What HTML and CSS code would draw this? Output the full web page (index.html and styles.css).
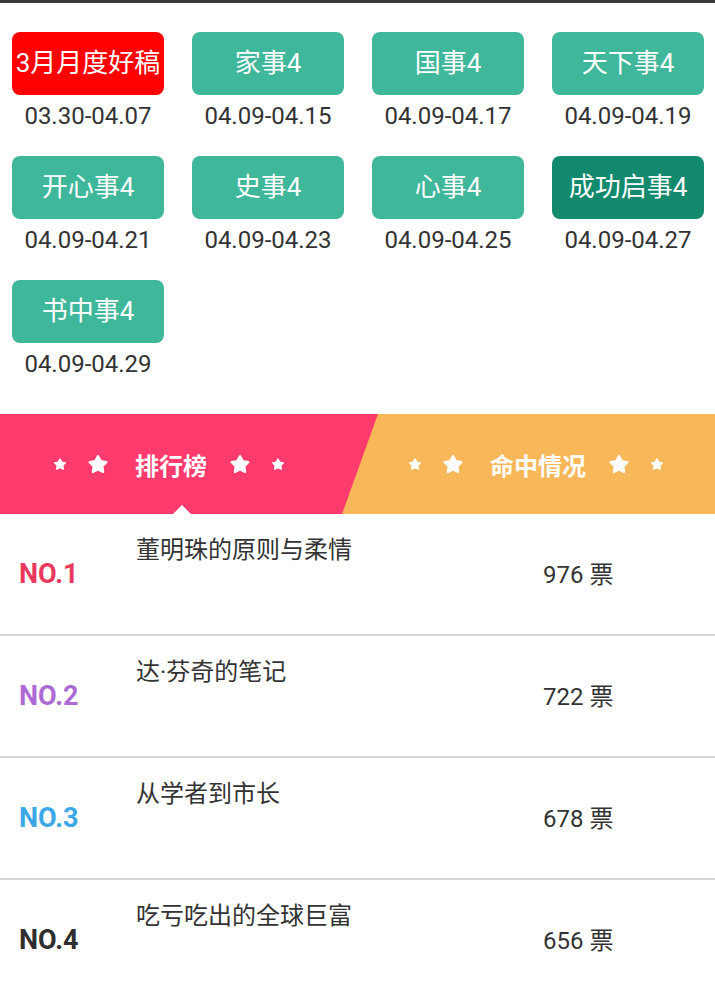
FILE: index.html
```html
<!DOCTYPE html>
<html lang="zh-CN">
<head>
    <meta charset="UTF-8">
    <title>月度好稿</title>
    <link rel="stylesheet" href="styles.css">
</head>
<body>
    <div class="topbar"></div>

    <!-- 期数按钮 -->
    <ul class="periods">
        <li><p class="btn red">3月月度好稿</p><p class="date">03.30-04.07</p></li>
        <li><p class="btn">家事4</p><p class="date">04.09-04.15</p></li>
        <li><p class="btn">国事4</p><p class="date">04.09-04.17</p></li>
        <li><p class="btn">天下事4</p><p class="date">04.09-04.19</p></li>
        <li><p class="btn">开心事4</p><p class="date">04.09-04.21</p></li>
        <li><p class="btn">史事4</p><p class="date">04.09-04.23</p></li>
        <li><p class="btn">心事4</p><p class="date">04.09-04.25</p></li>
        <li><p class="btn dark">成功启事4</p><p class="date">04.09-04.27</p></li>
        <li><p class="btn">书中事4</p><p class="date">04.09-04.29</p></li>
    </ul>

    <svg width="0" height="0" class="defs">
        <symbol id="star" viewBox="0 0 20 20">
            <polygon points="10,2.8 12.47,7.4 17.61,8.33 13.99,12.1 14.7,17.27 10,15 5.3,17.27 6.01,12.1 2.39,8.33 7.53,7.4"
                     fill="#fff" stroke="#fff" stroke-width="2" stroke-linejoin="round"/>
        </symbol>
    </svg>

    <!-- 选项卡 -->
    <div class="tabs">
        <div class="tab rank">
            <svg class="s"><use href="#star"/></svg>
            <svg class="b"><use href="#star"/></svg>
            <span>排行榜</span>
            <svg class="b"><use href="#star"/></svg>
            <svg class="s"><use href="#star"/></svg>
            <i class="arrow"></i>
        </div>
        <div class="tab hit">
            <svg class="s"><use href="#star"/></svg>
            <svg class="b"><use href="#star"/></svg>
            <span>命中情况</span>
            <svg class="b"><use href="#star"/></svg>
            <svg class="s"><use href="#star"/></svg>
        </div>
    </div>

    <!-- 排行列表 -->
    <ul class="list">
        <li><b class="no n1">NO.1</b><p class="title">董明珠的原则与柔情</p><p class="vote">976 票</p></li>
        <li><b class="no n2">NO.2</b><p class="title">达·芬奇的笔记</p><p class="vote">722 票</p></li>
        <li><b class="no n3">NO.3</b><p class="title">从学者到市长</p><p class="vote">678 票</p></li>
        <li><b class="no n4">NO.4</b><p class="title">吃亏吃出的全球巨富</p><p class="vote">656 票</p></li>
    </ul>
</body>
</html>
```

FILE: styles.css
```css
*{
    margin: 0;
    padding: 0;
}
body{
    background: #fff;
    font-family: Roboto, "Noto Sans CJK SC", sans-serif;
    color: #333;
}
.topbar{
    height: 3px;
    background: #3a3a3a;
}
.defs{
    position: absolute;
}
.periods{
    display: grid;
    grid-template-columns: repeat(4, 152px);
    column-gap: 28px;
    row-gap: 22px;
    padding: 29px 11px 0 12px;
    list-style: none;
}
.periods .btn{
    height: 63px;
    line-height: 63px;
    border-radius: 8px;
    background: #3fb79a;
    color: #fff;
    font-size: 26px;
    text-align: center;
    white-space: nowrap;
}
.periods .btn.red{
    background: #fe0000;
}
.periods .btn.dark{
    background: #13896d;
}
.periods .date{
    padding-top: 3px;
    line-height: 36px;
    font-size: 24px;
    text-align: center;
    color: #333;
}
.tabs{
    display: flex;
    height: 100px;
    margin-top: 32px;
}
.tab{
    display: flex;
    align-items: center;
    justify-content: center;
    gap: 20px;
    color: #fff;
    font-size: 24px;
    font-weight: bold;
    font-family: "Noto Sans CJK SC", sans-serif;
}
.tab.rank{
    position: relative;
    z-index: 1;
    width: 378px;
    padding-right: 40px;
    box-sizing: border-box;
    background: #fe3b6c;
    clip-path: polygon(0 0, 100% 0, calc(100% - 36px) 100%, 0 100%);
}
.tab.hit{
    flex: 1;
    margin-left: -36px;
    padding-left: 15px;
    background: #f8b85a;
}
.tab span{
    margin: 0 2px 0 6px;
}
.tab .s{
    width: 14px;
    height: 14px;
}
.tab .b{
    width: 22px;
    height: 22px;
}
.tab .arrow{
    position: absolute;
    left: 173px;
    bottom: 0;
    border: 9px solid transparent;
    border-bottom-color: #fff;
    border-top: 0;
    height: 0;
}
.list{
    list-style: none;
}
.list li{
    display: flex;
    align-items: center;
    height: 120px;
    border-bottom: 2px solid #d6d6d6;
}
.list .no{
    width: 117px;
    padding-left: 19px;
    font-size: 27px;
    font-weight: bold;
}
.list .n1{ color: #e8385e; }
.list .n2{ color: #ac6bd4; }
.list .n3{ color: #3aa8e6; }
.list .n4{ color: #2f2f2f; }
.list .title{
    align-self: flex-start;
    width: 407px;
    padding-top: 21px;
    font-size: 24px;
    line-height: 30px;
    color: #333;
}
.list .vote{
    margin-bottom: 3px;
    font-size: 24px;
    color: #333;
}
```
